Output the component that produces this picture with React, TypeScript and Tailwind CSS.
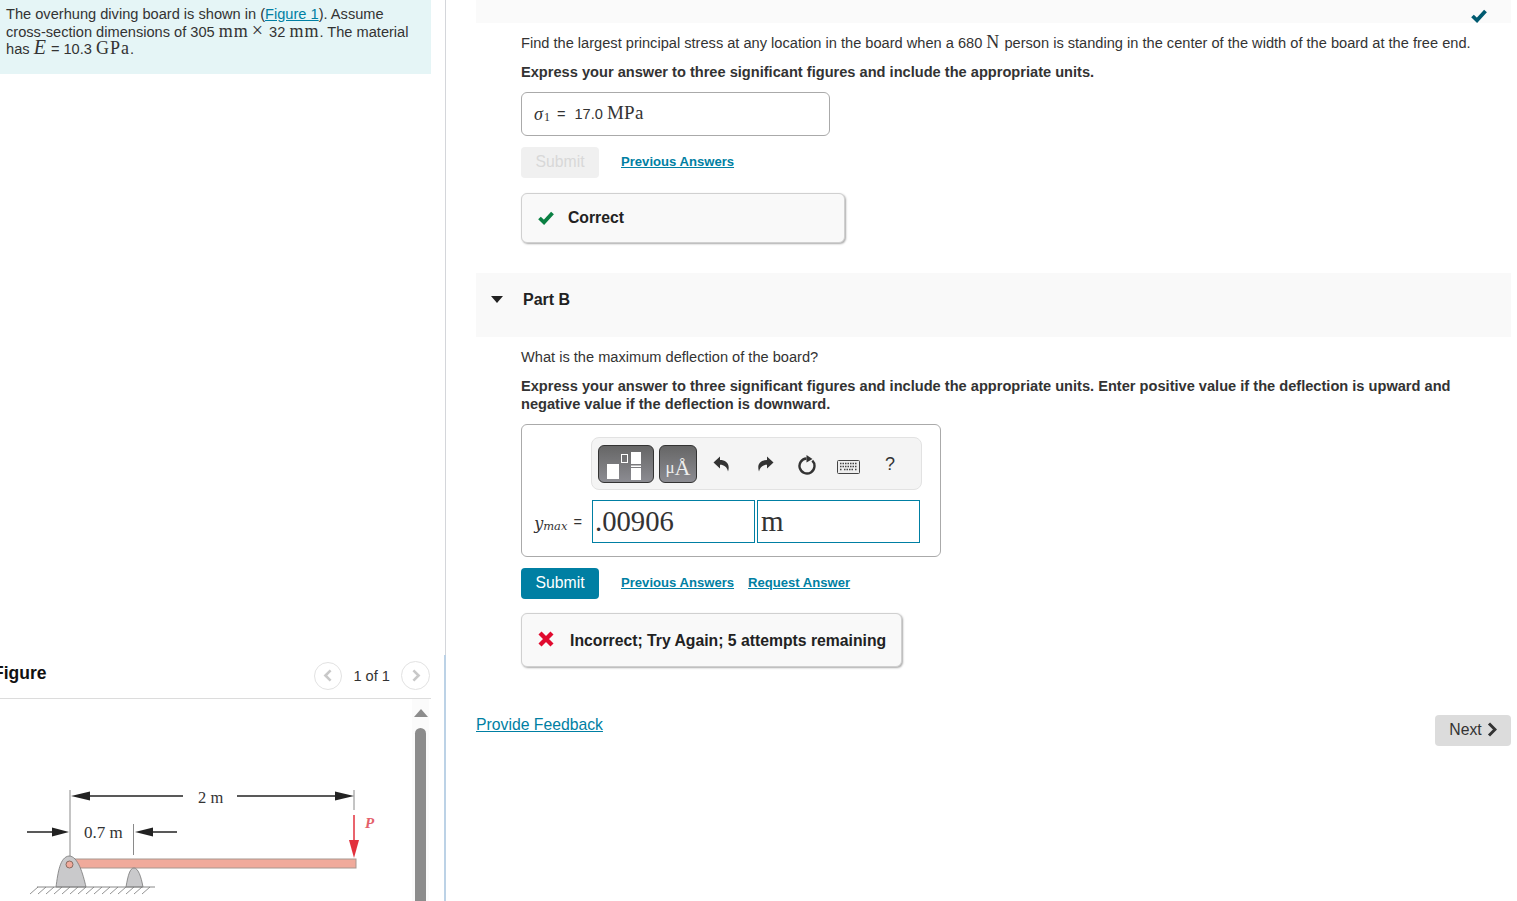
const serif = "font-['Liberation_Serif',serif]";

const Unit = ({ children }: { children: string }) => (
  <span className={`${serif} text-[18px] leading-[12px] tracking-[1px]`}>{children}</span>
);

const Check = ({ className }: { className: string }) => (
  <svg className={className} width="16" height="14" viewBox="0 0 16 14" fill="none">
    <path d="M1.500 7 L6 11.300 L14.500 2" stroke="currentColor" strokeWidth="3.800" />
  </svg>
);

const Chevron = ({ dir, className }: { dir: "left" | "right"; className: string }) => (
  <svg className={className} width="10" height="15" viewBox="0 0 10 15" fill="none">
    <path d={dir === "right" ? "M2 1.500 L8 7.500 L2 13.500" : "M8 1.500 L2 7.500 L8 13.500"} stroke="currentColor" strokeWidth="3" />
  </svg>
);

const Arrow = ({ flip }: { flip?: boolean }) => (
  <svg className={flip ? "-scale-x-100" : ""} width="17" height="16" viewBox="0 0 17 16" fill="#333">
    <path d="M0.500 6.500 L7 0.500 V4 C13 4 17.500 8 15 15.500 C14 11 11 8.800 7 8.800 V12.500 Z" />
  </svg>
);

const Diagram = () => {
  const hatch = [];
  for (let x = 38; x <= 155; x += 8) hatch.push(x);

  return (
    <svg width="412" height="203" viewBox="0 699 412 203">
      <g stroke="#8a8a8a" strokeWidth="1">
        <line x1="70" y1="790" x2="70" y2="857" />
        <line x1="354" y1="790" x2="354" y2="810" />
        <line x1="133.500" y1="824" x2="133.500" y2="855" />
      </g>
      <g stroke="#222" strokeWidth="1.500" fill="#222">
        <line x1="80" y1="796" x2="183" y2="796" />
        <polygon points="71,796 90,791.500 90,800.500" strokeWidth="0" />
        <line x1="237" y1="796" x2="340" y2="796" />
        <polygon points="354,796 335,791.500 335,800.500" strokeWidth="0" />
        <line x1="27" y1="832" x2="55" y2="832" />
        <polygon points="69,832 52,827.500 52,836.500" strokeWidth="0" />
        <line x1="145" y1="832" x2="177" y2="832" />
        <polygon points="135,832 153,827.500 153,836.500" strokeWidth="0" />
      </g>
      <text x="198" y="803" fontFamily="Liberation Serif, serif" fontSize="16.500" fill="#333">2 m</text>
      <text x="84" y="838" fontFamily="Liberation Serif, serif" fontSize="17" fill="#333">0.7 m</text>
      <rect x="70.500" y="859" width="285.500" height="9" fill="#f0aa9b" stroke="#a8978f" />
      <path d="M56 887 C58 872 60 857 69 856 C78 856 83 874 86 887 Z" fill="#c9c9cb" stroke="#777" strokeWidth="0.800" />
      <circle cx="69.500" cy="864.500" r="3.500" fill="#f0aa9b" stroke="#8a6a60" />
      <path d="M126 887 C128 875 130 868 134 868 C138 868 141 876 143 887 Z" fill="#c9c9cb" stroke="#777" strokeWidth="0.800" />
      <line x1="37" y1="887" x2="155" y2="887" stroke="#888" />
      {hatch.map((x) => (
        <line key={x} x1={x} y1="887" x2={x - 8} y2="894" stroke="#777" strokeWidth="0.800" />
      ))}
      <line x1="354" y1="815" x2="354" y2="843" stroke="#e2303c" strokeWidth="1.500" />
      <polygon points="354,858 349,840 359,840" fill="#e2303c" />
      <text x="365" y="828" fontFamily="Liberation Serif, serif" fontSize="15" fontStyle="italic" fontWeight="700" fill="#e4606a">P</text>
    </svg>
  );
};

const Toolbar = () => (
  <div className="ml-[69px] flex h-[53px] w-[331px] items-center rounded-lg border border-[#e2e2e2] bg-[#f4f4f4] pl-[6px]">
    <div className="h-[38px] w-[56px] rounded-md border border-[#333] bg-gradient-to-b from-[#666666] to-[#8c8c92]">
      <svg width="54" height="36" viewBox="0 0 54 36">
        <rect x="8" y="18" width="12" height="15" fill="#fff" />
        <rect x="22.500" y="8.500" width="6" height="8" fill="none" stroke="#fff" />
        <rect x="32" y="6" width="10" height="12" fill="#fff" />
        <rect x="32" y="19.500" width="10" height="1.500" fill="#fff" />
        <rect x="32" y="22" width="10" height="12" fill="#fff" />
      </svg>
    </div>
    <div className={`${serif} ml-[5px] flex h-[38px] w-[38px] items-end justify-center rounded-md border border-[#333] bg-gradient-to-b from-[#666666] to-[#8c8c92] pb-[2px] leading-[24px] text-[#eee]`}>
      <span className="text-[17px]">μ</span>
      <span className="text-[22px]">Å</span>
    </div>
    <span className="ml-[16px]"><Arrow /></span>
    <span className="ml-[27px]"><Arrow flip /></span>
    <svg className="ml-[23px]" width="20" height="22" viewBox="0 0 20 22" fill="none">
      <path d="M15.300 7.700 A7.500 7.500 0 1 1 9.500 5.500" stroke="#333" strokeWidth="2.400" />
      <polygon points="9.500,2 15.500,6 9.500,9.500" fill="#333" />
    </svg>
    <svg className="ml-[20px] mt-[6px]" width="23" height="14" viewBox="0 0 23 14" fill="none">
      <rect x="0.500" y="0.500" width="22" height="13" rx="1" fill="#eee" stroke="#444" />
      <path d="M3 3.500H20M3 6.500H20M3 9.500H5M7 9.500H16M18 9.500H20" stroke="#444" strokeWidth="1.500" strokeDasharray="1.500 1" />
    </svg>
    <span className="ml-[25px] text-[18px] text-[#333]">?</span>
  </div>
);

const Feedback = ({ width, children }: { width: string; children: React.ReactNode }) => (
  <div className={`flex items-center rounded-md border border-[#d0d0d0] bg-[#f9f9f9] pl-[16px] text-[15.750px] font-bold text-[#222] shadow-[1px_1px_2px_#aaa] ${width}`}>
    {children}
  </div>
);

export default function App() {
  return (
    <div className="flex h-[901px] w-[1517px] overflow-hidden bg-white font-['Liberation_Sans',sans-serif] text-[14.620px] leading-[18px] text-[#333]">
      <aside className="flex w-[446px] shrink-0 flex-col">
        <div className="flex-1 border-r border-[#d4d6da]">
          <div className="h-[74px] w-[431px] bg-[#e5f5f6] pl-[6px] pt-[6px]">
            <p className="leading-[17.500px]">
              The overhung diving board is shown in (
              <a href="#" className="text-[#007fa3] underline">Figure 1</a>
              ). Assume
              <br />
              cross-section dimensions of 305 <Unit>mm</Unit>
              <span className={`${serif} ml-[3px] mr-[2px] text-[20px] leading-[12px]`}>×</span> 32 <Unit>mm</Unit>. The material
              <br />
              has <span className={`${serif} mr-[1px] text-[20px] leading-[12px] italic`}>E</span> = 10.3 <Unit>GPa</Unit>.
            </p>
          </div>
        </div>

        <section className="h-[246px] border-r-2 border-[#bcd2e6]">
          <div className="flex h-[44px] w-[431px] items-center justify-between border-b border-[#dcdcdc] pr-px">
            <h3 className="ml-[-7px] mt-[-8px] text-[17.500px] font-bold text-[#111]">Figure</h3>
            <div className="mb-[2px] flex items-center">
              <span className="flex size-[28px] items-center justify-center rounded-full border border-[#e2e2e2] text-[#c8c8c8]">
                <Chevron dir="left" className="h-[13px]" />
              </span>
              <span className="ml-[11px] mr-[11px]">1 of 1</span>
              <span className="flex size-[29px] items-center justify-center rounded-full border border-[#e2e2e2] text-[#c8c8c8]">
                <Chevron dir="right" className="h-[13px]" />
              </span>
            </div>
          </div>
          <div className="flex w-[431px]">
            <Diagram />
            <div className="flex h-[202px] w-[17px] flex-col items-center bg-[#fbfbfb]">
              <div className="mt-[10px] size-0 border-x-[7px] border-b-[8px] border-x-transparent border-b-[#8c8c8c]" />
              <div className="mt-[11px] h-full w-[11px] rounded-t-md bg-[#8c8c8c]" />
            </div>
          </div>
        </section>
      </aside>

      <main className="ml-[30px] w-[1035px]">
        <div className="flex h-[23px] justify-end bg-[#fafafa] pr-[24px] pt-[9px]">
          <Check className="text-[#005a70]" />
        </div>

        <div className="pl-[45px]">
          <p className="mt-[11px]">
            Find the largest principal stress at any location in the board when a 680 <Unit>N</Unit> person is standing in the center of the width of the board at the free end.
          </p>
          <p className="mt-[11px] font-bold">Express your answer to three significant figures and include the appropriate units.</p>

          <div className="mt-[11px] flex h-[44px] w-[309px] items-center rounded-md border border-[#aaa] pl-[12px]">
            <span className={`${serif} text-[18px] italic`}>σ</span>
            <span className={`${serif} ml-[1px] mt-[6px] text-[12px]`}>1</span>
            <span className="ml-[7px]">=</span>
            <span className="ml-[9px]">17.0</span>
            <span className={`${serif} mb-[2px] ml-[4px] text-[19px] tracking-[0.3px]`}>MPa</span>
          </div>

          <div className="mt-[11px] flex items-center">
            <button type="button" className="h-[31px] w-[78px] rounded-sm bg-[#f0f0f0] pb-[2px] text-[15.750px] text-[#d8d8d8]">Submit</button>
            <a href="#" className="mb-[2px] ml-[22px] text-[13.100px] font-bold text-[#007fa3] underline">Previous Answers</a>
          </div>

          <div className="mt-[15px]">
            <Feedback width="h-[50px] w-[324px]">
              <Check className="text-[#0a8043]" />
              <span className="ml-[14px]">Correct</span>
            </Feedback>
          </div>
        </div>

        <div className="mt-[30px] flex h-[64px] items-center bg-[#f9f9f9] pb-[11px] pl-[15px]">
          <div className="size-0 border-x-[6.500px] border-t-[7px] border-x-transparent border-t-[#222]" />
          <h2 className="ml-[20px] text-[16px] font-bold text-[#222]">Part B</h2>
        </div>

        <div className="pl-[45px]">
          <p className="mt-[11px]">What is the maximum deflection of the board?</p>
          <p className="mt-[11px] font-bold">
            Express your answer to three significant figures and include the appropriate units. Enter positive value if the deflection is upward and negative value if the deflection is downward.
          </p>

          <div className="mt-[11px] h-[133px] w-[420px] rounded-md border border-[#aaa] pt-[12px]">
            <Toolbar />
            <div className="mt-[10px] flex items-center">
              <div className="flex w-[70px] items-center justify-end pr-[10px]">
                <span className="mt-[5px] font-['DejaVu_Serif',serif] text-[16px] italic">y</span>
                <span className="mt-[9px] font-['DejaVu_Serif',serif] text-[11.500px] italic">max</span>
                <span className="ml-[6px]">=</span>
              </div>
              <div className={`${serif} h-[43px] w-[163px] border border-[#007fa3] pl-[2px] text-[28.700px] leading-[40px]`}>.00906</div>
              <div className={`${serif} ml-[2px] h-[43px] w-[163px] border border-[#007fa3] pl-[3px] text-[29px] leading-[40px]`}>m</div>
            </div>
          </div>

          <div className="mt-[11px] flex items-center">
            <button type="button" className="h-[31px] w-[78px] rounded-sm bg-[#007fa3] pb-[2px] text-[15.750px] text-white">Submit</button>
            <a href="#" className="mb-[2px] ml-[22px] text-[13.100px] font-bold text-[#007fa3] underline">Previous Answers</a>
            <a href="#" className="mb-[2px] ml-[14px] text-[13.100px] font-bold text-[#007fa3] underline">Request Answer</a>
          </div>

          <div className="mt-[14px]">
            <Feedback width="h-[54px] w-[381px]">
              <svg className="mb-[3px]" width="16" height="16" viewBox="0 0 16 16" fill="none">
                <path d="M2 2 L14 14 M14 2 L2 14" stroke="#e00a2e" strokeWidth="4.300" />
              </svg>
              <span className="ml-[16px] mt-[2px]">Incorrect; Try Again; 5 attempts remaining</span>
            </Feedback>
          </div>
        </div>

        <div className="mt-[48px] flex items-start justify-between">
          <a href="#" className="mt-[1px] text-[15.750px] text-[#007fa3] underline">Provide Feedback</a>
          <button type="button" className="flex h-[31px] w-[76px] items-center justify-center rounded-sm bg-[#dcdcdc] pb-[2px] text-[15.750px] text-[#333]">
            Next
            <Chevron dir="right" className="ml-[5px]" />
          </button>
        </div>
      </main>
    </div>
  );
}
